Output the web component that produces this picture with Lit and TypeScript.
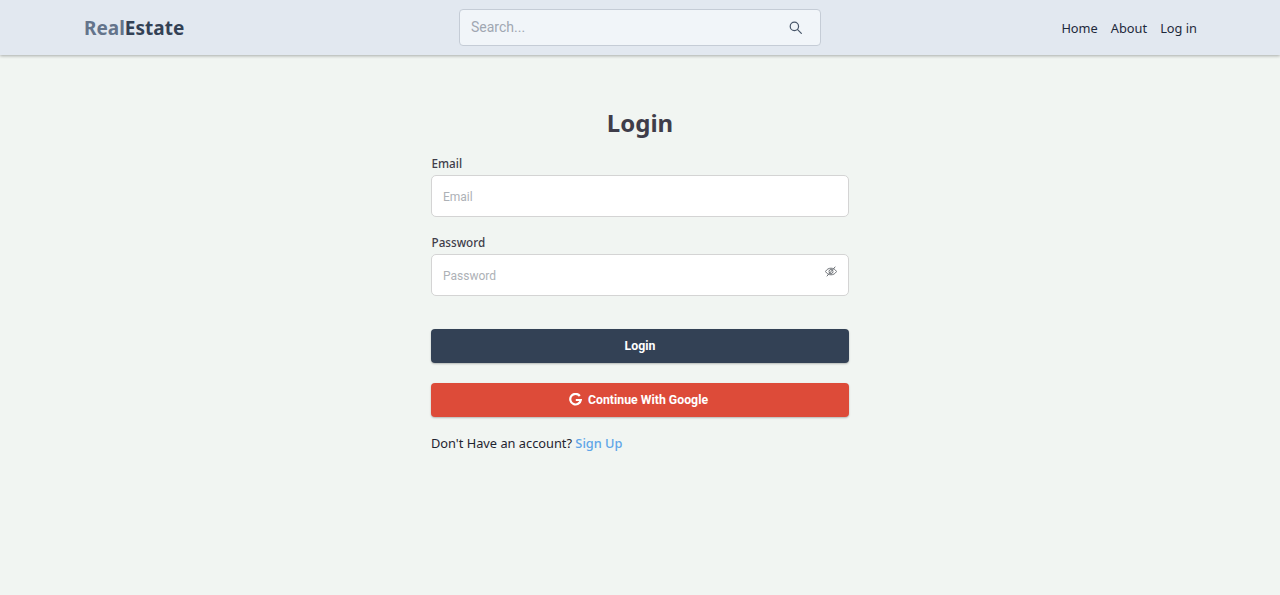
import { LitElement, html, css } from "lit";
import { customElement } from "lit/decorators.js";

@customElement("app-root")
export class AppRoot extends LitElement {
  static styles = css`
    :host { display: block; min-height: 595px; background: #f1f5f2; font-family: "Noto Sans", "Open Sans", sans-serif; color: #1f1f1f; }
    * { box-sizing: border-box; }
    header { height: 55px; background: #e2e8f0; box-shadow: 0 1px 3px 0 rgba(0,0,0,.3); display: flex; align-items: center; justify-content: space-between; padding: 0 83px; position: relative; }
    .logo { flex: 1; font-size: 19px; font-weight: 700; margin: 0; text-indent: 1px; color: #334155; line-height: 28px; }
    .logo span { color: #64748b; }
    .search { width: 362px; height: 37px; background: #f1f5f9; border: 1px solid #c5ccd6; border-radius: 4px; display: flex; align-items: center; justify-content: space-between; padding: 0 18px 0 11px; }
    .search span { font: 14px Roboto, sans-serif; color: #a0a7b2; margin-top: -1px; }
    .search svg { display: block; }
    nav { flex: 1; display: flex; justify-content: flex-end; gap: 13px; font-size: 12.8px; line-height: 20px; color: #1e293b; padding-top: 1px; }
    main { width: 418px; margin: 0 auto; padding-top: 48px; }
    h1 { margin: 0 0 10px; text-align: center; font-size: 24px; line-height: 40px; font-weight: 700; color: #3f3d4a; }
    label { display: block; font-size: 11.7px; line-height: 20px; font-weight: 500; color: #3f3d4a; margin-bottom: 2px; padding-left: .5px; }
    .input { height: 41.5px; background: #fff; border: 1px solid #d4d4d4; border-radius: 5px; display: flex; align-items: center; justify-content: space-between; padding: 2px 11px 0; font: 12px Roboto, sans-serif; color: #adb1b6; margin-bottom: 15.5px; }
    .input svg { margin: -9px 0 0; }
    .btn { height: 33.5px; border-radius: 4px; display: flex; align-items: center; justify-content: center; gap: 6px; font: 700 12.3px Roboto, sans-serif; color: #fff; box-shadow: 0 1px 2px rgba(0,0,0,.25); }
    .primary { background: #334155; margin-top: 33.5px; }
    .google { background: #dd4b39; margin-top: 20.5px; padding-right: 3px; }
    p { margin: 16.5px 0 0; font-size: 12.8px; line-height: 20px; color: #1f2430; }
    p a { color: #60a5e8; font-weight: 500; }
  `;

  render() {
    return html`
      <header>
        <h2 class="logo"><span>Real</span>Estate</h2>
        <div class="search">
          <span>Search...</span>
          <svg width="13" height="13" viewBox="0 0 14 14" fill="none" stroke="#475569" stroke-width="1.300"><circle cx="5.800" cy="5.800" r="4.500"/><path d="M9 9l4.300 4.300" stroke-linecap="round"/></svg>
        </div>
        <nav><span>Home</span><span>About</span><span>Log in</span></nav>
      </header>
      <main>
        <h1>Login</h1>
        <label>Email</label>
        <div class="input">Email</div>
        <label>Password</label>
        <div class="input">
          <span>Password</span>
          <svg width="12" height="11" viewBox="0 0 12 11" fill="none" stroke="#6f7378" stroke-width="1"><path d="M.5 5.500C1.800 3.300 3.700 2.200 6 2.200S10.200 3.300 11.500 5.500C10.200 7.700 8.300 8.800 6 8.800S1.800 7.700.5 5.500z"/><circle cx="6" cy="5.500" r="2"/><path d="M1.800 10.300 10.300.7"/></svg>
        </div>
        <div class="btn primary">Login</div>
        <div class="btn google">
          <svg width="13" height="13" viewBox="0 0 13 13" fill="none" stroke="#fff" stroke-width="2.200"><path d="M10.800 3A5.300 5.300 0 1 0 11.800 7H6.800"/></svg>
          <span>Continue With Google</span>
        </div>
        <p>Don't Have an account? <a>Sign Up</a></p>
      </main>
    `;
  }
}
